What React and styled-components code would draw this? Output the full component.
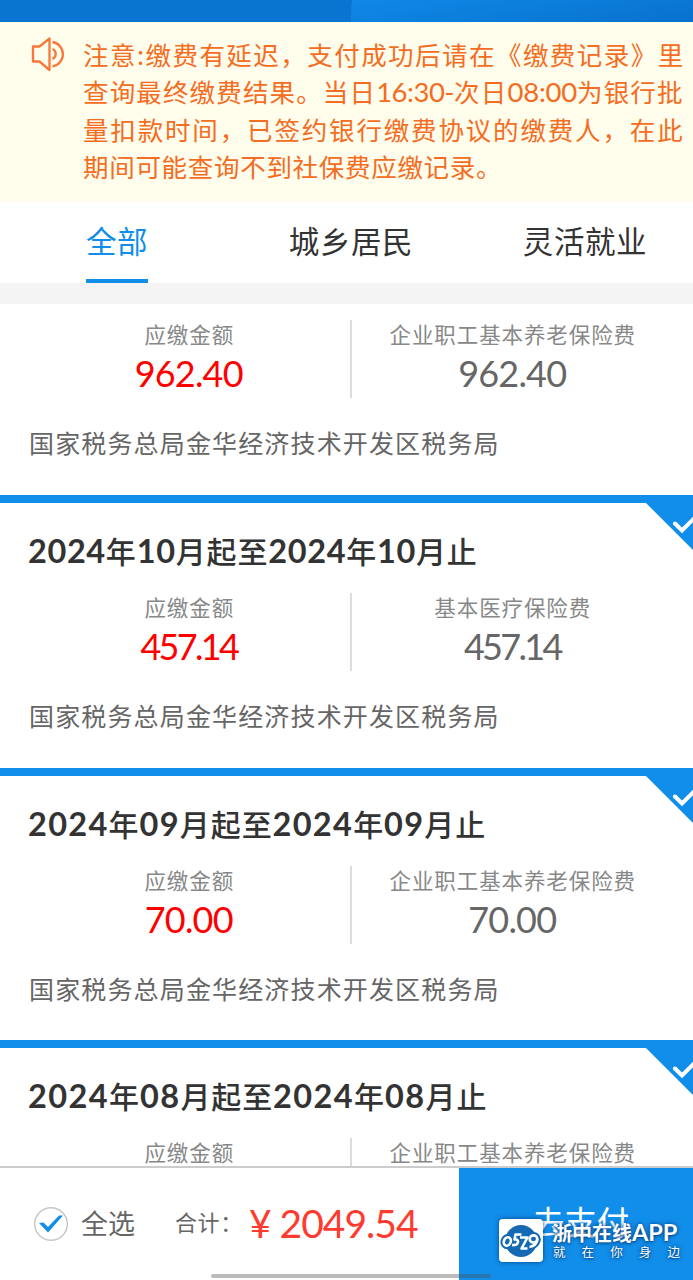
import React from "react";
import styled, { createGlobalStyle } from "styled-components";

const GlobalStyle = createGlobalStyle`
  * { box-sizing: border-box; }
  body {
    margin: 0;
    background: #fff;
    font-family: "Noto Sans CJK SC", "Liberation Sans", sans-serif;
    font-weight: 400;
  }
`;

const Page = styled.div`
  position: relative;
  display: flex;
  flex-direction: column;
  width: 693px;
  height: 1280px;
  overflow: hidden;
`;

const Header = styled.header`
  display: flex;
  flex: none;
  height: 22px;
  background: #0a74d1;
`;

const HeaderShine = styled.div`
  width: 342px;
  margin-left: auto;
  border-top-left-radius: 3px 40px;
  background: linear-gradient(170deg, #1088e6 0%, #0c7edc 45%, #0971cd 100%);
`;

const Notice = styled.section`
  display: flex;
  flex: none;
  height: 180px;
  padding: 15px 0 0 31px;
  background: #fffdeb;
  color: #f56c23;
`;

const NoticeText = styled.div`
  margin: -2px 0 0 17px;
`;

const NoticeLine = styled.div`
  height: 37.4px;
  line-height: 37.4px;
  font-size: 25.5px;
  white-space: nowrap;
  letter-spacing: ${(p) => p.$gap}px;
`;

const Num = styled.span`
  font-family: Lato, "Liberation Sans", sans-serif;
  font-size: ${(p) => p.$size}px;
  letter-spacing: ${(p) => p.$gap || 0}px;
  line-height: 1;
`;

const Tabs = styled.nav`
  display: flex;
  flex: none;
  height: 81px;
`;

const Tab = styled.div`
  display: flex;
  flex: none;
  justify-content: center;
  width: 234px;

  span {
    height: 81px;
    line-height: 77px;
    font-size: 30.5px;
    letter-spacing: 0.6px;
    color: ${(p) => (p.$active ? "#118eea" : "#333")};
    border-bottom: 4px solid ${(p) => (p.$active ? "#118eea" : "transparent")};
  }
`;

const List = styled.main`
  flex: 1;
  min-height: 0;
  overflow: hidden;
  border-top: 21px solid #f4f4f4;
`;

const Card = styled.article`
  position: relative;
  height: ${(p) => (p.$partial ? 191 : 272.5)}px;
  padding: ${(p) => (p.$partial ? 16 : 0)}px 20px 0 28px;
  border-top: ${(p) => (p.$partial ? 0 : 8)}px solid #118eea;
`;

const Title = styled.h2`
  margin: 0;
  height: 90px;
  line-height: 94px;
  font-size: 30px;
  font-weight: 500;
  letter-spacing: 0.9px;
  color: #333;
  white-space: nowrap;

  ${Num} {
    font-weight: 700;
  }
`;

const Columns = styled.div`
  display: flex;
  height: 78px;
`;

const Column = styled.div`
  flex: 1;
  text-align: center;
  color: ${(p) => (p.$due ? "#ff0000" : "#666")};

  & + & {
    border-left: 2px solid #ddd;
  }
`;

const Label = styled.div`
  height: 30px;
  padding-left: 1px;
  line-height: 27px;
  font-size: 21.5px;
  letter-spacing: 0.9px;
  color: #888;
`;

const Amount = styled.div`
  height: 48px;
  line-height: 61px;
`;

const Office = styled.div`
  height: 92px;
  padding-left: 1px;
  line-height: 89px;
  font-size: 25px;
  letter-spacing: 1.15px;
  color: #666;
`;

const Corner = styled.svg`
  position: absolute;
  top: 0;
  right: 0;
`;

const Footer = styled.footer`
  display: flex;
  flex: none;
  align-items: center;
  height: 114px;
  border-top: 2px solid #ccc;
  background: #fff;
  color: #666;
`;

const SelectAll = styled.div`
  display: flex;
  align-items: center;
  width: 142px;
  margin-left: 33px;
  gap: 12px;
  font-size: 27px;

  span {
    margin-top: -4px;
  }
`;

const TotalLabel = styled.div`
  width: 74px;
  margin-top: -6px;
  font-size: 22px;
  letter-spacing: 0.6px;
  white-space: nowrap;
`;

const Total = styled.div`
  margin-top: -2px;
  color: #ff3b30;
  white-space: nowrap;
`;

const PayButton = styled.div`
  width: 234px;
  height: 112px;
  margin-left: auto;
  padding-left: 9px;
  background: #118eea;
  color: #fff;
  font-size: 32.5px;
  line-height: 106px;
  text-align: center;
`;

const HomeBar = styled.div`
  position: absolute;
  left: 211px;
  bottom: 2px;
  width: 280px;
  height: 4px;
  border-radius: 2px;
  background: rgba(80, 80, 80, 0.38);
`;

const Watermark = styled.div`
  position: absolute;
  left: 499px;
  bottom: 18px;
  display: flex;
  gap: 9px;
  color: #fff;
  text-shadow: 0 0 4px rgba(0, 50, 110, 0.85), 0 1px 2px rgba(0, 50, 110, 0.6);

  svg {
    border-radius: 4px;
    box-shadow: 0 0 5px rgba(0, 40, 90, 0.7);
  }
`;

const Brand = styled.div`
  height: 26px;
  line-height: 27px;
  font-size: 20px;
  font-weight: 700;
  white-space: nowrap;

  b {
    font-family: Lato, "Liberation Sans", sans-serif;
    font-size: 23.5px;
    font-weight: 700;
  }
`;

const Slogan = styled.div`
  display: flex;
  justify-content: space-between;
  width: 127px;
  margin-left: 1px;
  line-height: 14px;
  font-size: 12.5px;
`;

const bills = [
  { amount: "962.40", gap: -0.8, type: "企业职工基本养老保险费" },
  { year: "2024", month: "10", titleGap: 0.6, amount: "457.14", gap: -2.7, type: "基本医疗保险费" },
  { year: "2024", month: "09", titleGap: 1.3, amount: "70.00", gap: -0.8, type: "企业职工基本养老保险费" },
  { year: "2024", month: "08", titleGap: 1.4, amount: "70.00", gap: -0.8, type: "企业职工基本养老保险费" },
];

function Speaker() {
  return (
    <svg width="35" height="36" viewBox="0 0 35 36" fill="none" stroke="#f9783a" strokeWidth="2.3">
      <path d="M2 9.5H8.5L18.5 1.5V33L8.5 24.5H2Z" strokeLinejoin="round" />
      <path d="M21.5 5A12.3 12.3 0 0 1 21.5 29.3" />
      <path d="M21.5 12A5.5 5.5 0 0 1 21.5 22" />
    </svg>
  );
}

function CornerCheck() {
  return (
    <Corner width="47" height="47" viewBox="0 0 47 47">
      <path d="M0 0H47V47Z" fill="#118eea" />
      <path d="M29 20.5L36 27.5L49 14.5" fill="none" stroke="#fff" strokeWidth="4" strokeLinecap="round" />
    </Corner>
  );
}

function LogoDigits() {
  return (
    <>
      <ellipse cx="8.3" cy="22.5" rx="3.4" ry="4.4" transform="rotate(20 8.3 22.5)" />
      <path d="M22.5 15.5H16.5L15.5 20.5C21 19.5 20 27 13 26" />
      <path d="M21 18.5H28.5L22.5 29.5H28.5" />
      <ellipse cx="34.5" cy="20" rx="3.8" ry="3.6" />
      <path d="M38.3 19.5C38.6 24 35 27.5 30.5 28" />
    </>
  );
}

function Logo() {
  return (
    <svg width="44" height="43" viewBox="0 0 44 43">
      <rect width="44" height="43" fill="#fff" />
      <circle cx="22" cy="22" r="16" fill="#1569b3" />
      <g fill="none" strokeLinejoin="round">
        <g stroke="#1569b3" strokeWidth="6.6">
          <LogoDigits />
        </g>
        <g stroke="#fff" strokeWidth="2.6">
          <LogoDigits />
        </g>
      </g>
    </svg>
  );
}

function Bill({ bill }) {
  return (
    <Card $partial={!bill.year}>
      {bill.year && (
        <>
          <CornerCheck />
          <Title>
            <Num $size={32.5} $gap={bill.titleGap}>{bill.year}</Num>年
            <Num $size={32.5} $gap={bill.titleGap}>{bill.month}</Num>月起至
            <Num $size={32.5} $gap={bill.titleGap}>{bill.year}</Num>年
            <Num $size={32.5} $gap={bill.titleGap}>{bill.month}</Num>月止
          </Title>
        </>
      )}
      <Columns>
        <Column $due>
          <Label>应缴金额</Label>
          <Amount><Num $size={36} $gap={bill.gap}>{bill.amount}</Num></Amount>
        </Column>
        <Column>
          <Label>{bill.type}</Label>
          <Amount><Num $size={36} $gap={bill.gap}>{bill.amount}</Num></Amount>
        </Column>
      </Columns>
      <Office>国家税务总局金华经济技术开发区税务局</Office>
    </Card>
  );
}

export default function App() {
  return (
    <Page>
      <GlobalStyle />
      <Header>
        <HeaderShine />
      </Header>
      <Notice>
        <Speaker />
        <NoticeText>
          <NoticeLine $gap={1.46}>注意:缴费有延迟，支付成功后请在《缴费记录》里</NoticeLine>
          <NoticeLine $gap={1.15}>
            查询最终缴费结果。当日<Num $size={27.5} $gap={-0.5}>16:30-</Num>次日<Num $size={27.5} $gap={-0.2}>08:00</Num>为银行批
          </NoticeLine>
          <NoticeLine $gap={1.84}>量扣款时间，已签约银行缴费协议的缴费人，在此</NoticeLine>
          <NoticeLine $gap={0.7}>期间可能查询不到社保费应缴记录。</NoticeLine>
        </NoticeText>
      </Notice>
      <Tabs>
        <Tab $active><span>全部</span></Tab>
        <Tab><span>城乡居民</span></Tab>
        <Tab><span>灵活就业</span></Tab>
      </Tabs>
      <List>
        {bills.map((bill, i) => (
          <Bill key={i} bill={bill} />
        ))}
      </List>
      <Footer>
        <SelectAll>
          <svg width="36" height="36" viewBox="0 0 36 36">
            <circle cx="18" cy="18" r="16.3" fill="#fff" stroke="#c8c8c8" strokeWidth="1.5" />
            <path d="M6 17L10.5 16.5L15 21L26 9.5H30L15 26.5Z" fill="#118eea" />
          </svg>
          <span>全选</span>
        </SelectAll>
        <TotalLabel>合计：</TotalLabel>
        <Total>
          <Num $size={39} $gap={-1}>¥ 2049.54</Num>
        </Total>
        <PayButton>去支付</PayButton>
      </Footer>
      <HomeBar />
      <Watermark>
        <Logo />
        <div>
          <Brand>浙中在线<b>APP</b></Brand>
          <Slogan>
            {[..."就在你身边"].map((c) => (
              <span key={c}>{c}</span>
            ))}
          </Slogan>
        </div>
      </Watermark>
    </Page>
  );
}
